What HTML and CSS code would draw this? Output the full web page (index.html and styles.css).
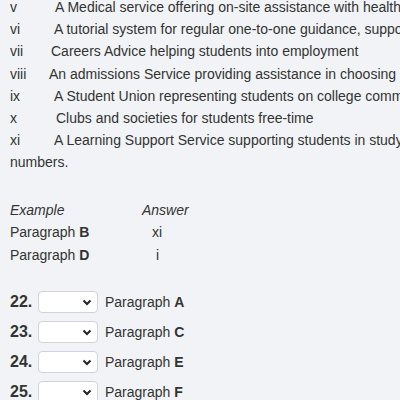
FILE: index.html
```html
<!DOCTYPE html>
<html lang="en">
<head>
  <meta charset="UTF-8">
  <title>Reading Task</title>
  <link rel="stylesheet" href="styles.css">
</head>
<body>

  <div class="options">
    <div class="opt"><span class="num">v</span><span class="txt in-6">A Medical service offering on-site assistance with health problems</span></div>
    <div class="opt"><span class="num">vi</span><span class="txt in-5">A tutorial system for regular one-to-one guidance, support and feedback</span></div>
    <div class="opt"><span class="num">vii</span><span class="txt in-2">Careers Advice helping students into employment</span></div>
    <div class="opt"><span class="num">viii</span><span class="txt">An admissions Service providing assistance in choosing courses</span></div>
    <div class="opt"><span class="num">ix</span><span class="txt in-5">A Student Union representing students on college committees</span></div>
    <div class="opt"><span class="num">x</span><span class="txt in-7">Clubs and societies for students free-time</span></div>
    <div class="opt"><span class="num">xi</span><span class="txt in-5">A Learning Support Service supporting students in study skills and in learning</span></div>
    <div class="opt">numbers.</div>
  </div>

  <div class="example">
    <div class="ex-row"><em>Example</em><em>Answer</em></div>
    <div class="ex-row"><span>Paragraph <b>B</b></span><span class="ans">xi</span></div>
    <div class="ex-row"><span>Paragraph <b>D</b></span><span class="ans ans-i">i</span></div>
  </div>

  <div class="questions">
    <div class="q">
      <span class="q-num">22.</span>
      <div class="pick">
        <select><option></option><option>i</option><option>ii</option><option>iii</option></select>
        <svg class="chev" width="10" height="7" viewBox="0 0 10 7"><path d="M1.5 1.5 L5 5 L8.5 1.5" fill="none" stroke="#222" stroke-width="2"/></svg>
      </div>
      <span>Paragraph <b>A</b></span>
    </div>
    <div class="q">
      <span class="q-num">23.</span>
      <div class="pick">
        <select><option></option><option>i</option><option>ii</option><option>iii</option></select>
        <svg class="chev" width="10" height="7" viewBox="0 0 10 7"><path d="M1.5 1.5 L5 5 L8.5 1.5" fill="none" stroke="#222" stroke-width="2"/></svg>
      </div>
      <span>Paragraph <b>C</b></span>
    </div>
    <div class="q">
      <span class="q-num">24.</span>
      <div class="pick">
        <select><option></option><option>i</option><option>ii</option><option>iii</option></select>
        <svg class="chev" width="10" height="7" viewBox="0 0 10 7"><path d="M1.5 1.5 L5 5 L8.5 1.5" fill="none" stroke="#222" stroke-width="2"/></svg>
      </div>
      <span>Paragraph <b>E</b></span>
    </div>
    <div class="q">
      <span class="q-num">25.</span>
      <div class="pick">
        <select><option></option><option>i</option><option>ii</option><option>iii</option></select>
        <svg class="chev" width="10" height="7" viewBox="0 0 10 7"><path d="M1.5 1.5 L5 5 L8.5 1.5" fill="none" stroke="#222" stroke-width="2"/></svg>
      </div>
      <span>Paragraph <b>F</b></span>
    </div>
  </div>

</body>
</html>
```

FILE: styles.css
```css
html {
  background-color: #f1f3f6;
}
body {
  font-family: "Liberation Sans", Arial, sans-serif;
  font-size: 14px;
  color: #333;
  margin: -4px 0 0;
  padding: 0 10px;
  overflow: hidden;
}
.options {
  white-space: nowrap;
}
.opt {
  line-height: 22.2px;
}
.num {
  display: inline-block;
  width: 39px;
}
.in-2 { margin-left: 2px; }
.in-5 { margin-left: 5px; }
.in-6 { margin-left: 6px; }
.in-7 { margin-left: 7px; }
.example {
  margin-top: 25px;
}
.ex-row {
  display: grid;
  grid-template-columns: 132px auto;
  line-height: 22.5px;
}
.ans {
  padding-left: 10px;
}
.ans-i {
  padding-left: 14px;
}
.questions {
  margin-top: 21px;
}
.q {
  display: flex;
  align-items: center;
  height: 30px;
}
.q-num {
  font-weight: bold;
  font-size: 16px;
  width: 28px;
}
.pick {
  position: relative;
  margin-right: 7px;
}
.pick select {
  appearance: none;
  width: 60px;
  height: 22px;
  border: 1px solid #ced4da;
  border-radius: 4px;
  background: #fff;
  display: block;
  font-family: inherit;
}
.chev {
  position: absolute;
  right: 6px;
  top: 8px;
  pointer-events: none;
}
```
